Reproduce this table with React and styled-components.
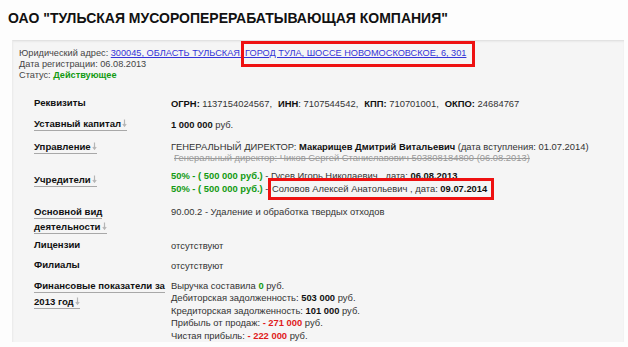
import React from "react";
import styled, { createGlobalStyle } from "styled-components";

const GlobalStyle = createGlobalStyle`
  body {
    margin: 0;
    background: #fdfdfd;
    font-family: "Liberation Sans", Arial, sans-serif;
    color: #333;
  }
`;

const Page = styled.div`
  width: 628px;
  height: 347px;
  overflow: hidden;
`;

const Title = styled.h1`
  margin: 0;
  padding: 9px 0 0 8px;
  font-size: 14px;
  line-height: 18px;
  font-weight: bold;
  color: #111;
`;

const Panel = styled.div`
  margin: 13px 0 0 12px;
  width: 611px;
  height: 301px;
  overflow: hidden;
  background: #f5f5f5;
  border-top: 1px solid #e2e2e2;
  border-left: 1px solid #ececec;
  box-shadow: inset 0 1px 2px rgba(0, 0, 0, 0.05);
`;

const Info = styled.div`
  padding: 7px 6px 0;
  font-size: 9.2px;
  line-height: 11px;
  color: #444;
`;

const Address = styled.a`
  color: #3434d8;
  text-decoration: underline;
`;

const Marked = styled.span`
  border: 3px solid #ee1111;
  padding: ${(p) => p.$pad};
  margin: ${(p) => p.$margin};
`;

const Active = styled.b`
  color: #129a12;
`;

const Table = styled.div`
  padding-left: 21px;
  display: flex;
  flex-direction: column;
`;

const Row = styled.div`
  display: flex;
  align-items: flex-start;
  margin-top: ${(p) => p.$mt || 3}px;
`;

const Label = styled.div`
  flex: 0 0 137px;
  font-size: 9.6px;
  line-height: ${(p) => p.$lh || 18}px;
  padding-top: ${(p) => p.$top || 0}px;
  font-weight: bold;
  color: #111;
`;

const Toggle = styled.span`
  padding-bottom: 1px;
  border-bottom: 1px solid #a8a8a8;
`;

const Arrow = () => (
  <svg width="5" height="8" viewBox="0 0 5 8" style={{ marginLeft: 1 }}>
    <path d="M2.5 0.5V7M0.8 5L2.5 7.2L4.2 5" stroke="#b5b5b5" strokeWidth="1.2" fill="none" />
  </svg>
);

const Value = styled.div`
  flex: 1;
  min-width: 0;
  font-size: 9.4px;
  line-height: ${(p) => p.$lh || 13}px;
  padding-top: ${(p) => (p.$top === undefined ? 2.5 : p.$top)}px;
  color: #333;
`;

const Gap = styled.span`
  display: inline-block;
  width: 6px;
`;

const Old = styled.div`
  color: #9a9a9a;
  text-decoration: line-through;
  padding-left: 3px;
`;

const Green = styled.b`
  color: #129a12;
`;

const Red = styled.b`
  color: #e01b1b;
`;

const Dark = styled.b`
  color: #111;
`;

export default function App() {
  return (
    <Page>
      <GlobalStyle />
      <Title>ОАО "ТУЛЬСКАЯ МУСОРОПЕРЕРАБАТЫВАЮЩАЯ КОМПАНИЯ"</Title>
      <Panel>
        <Info>
          <div>
            Юридический адрес:{" "}
            <Address>
              300045, ОБЛАСТЬ ТУЛЬСКАЯ,{" "}
              <Marked $pad="4px 6px 6px 1px" $margin="0 -9px 0 -4px">
                ГОРОД ТУЛА, ШОССЕ НОВОМОСКОВСКОЕ, 6, 301
              </Marked>
            </Address>
          </div>
          <div>Дата регистрации: 06.08.2013</div>
          <div>
            Статус: <Active>Действующее</Active>
          </div>
        </Info>
        <Table>
          <Row $mt={13}>
            <Label>Реквизиты</Label>
            <Value>
              <Dark>ОГРН:</Dark> 1137154024567,<Gap />
              <Dark>ИНН</Dark>: 7107544542,<Gap />
              <Dark>КПП:</Dark> 710701001,<Gap />
              <Dark>ОКПО:</Dark> 24684767
            </Value>
          </Row>
          <Row $mt={3}>
            <Label>
              <Toggle>Уставный капитал<Arrow /></Toggle>
            </Label>
            <Value>
              <Dark>1 000 000</Dark> руб.
            </Value>
          </Row>
          <Row $mt={5}>
            <Label>
              <Toggle>Управление<Arrow /></Toggle>
            </Label>
            <Value $lh={11.5}>
              <div>
                ГЕНЕРАЛЬНЫЙ ДИРЕКТОР: <Dark>Макарищев Дмитрий Витальевич</Dark> (дата вступления: 01.07.2014)
              </div>
              <Old>Генеральный директор: Чиков Сергей Станиславович 503808184800 (06.08.2013)</Old>
            </Value>
          </Row>
          <Row $mt={5}>
            <Label $top={2}>
              <Toggle>Учредители<Arrow /></Toggle>
            </Label>
            <Value $lh={13.5} $top={0}>
              <div>
                <Green>50% - ( 500 000 руб.)</Green> - Гусев Игорь Николаевич , дата: <Dark>06.08.2013</Dark>
              </div>
              <div>
                <Green>50% - ( 500 000 руб.)</Green> -{" "}
                <Marked $pad="2px 4px 3px 1px" $margin="0 -6px 0 -3px">
                  Соловов Алексей Анатольевич , дата: <Dark>09.07.2014</Dark>
                </Marked>
              </div>
            </Value>
          </Row>
          <Row $mt={8}>
            <Label $lh={15}>
              <Toggle>Основной вид деятельности<Arrow /></Toggle>
            </Label>
            <Value $top={1}>90.00.2 - Удаление и обработка твердых отходов</Value>
          </Row>
          <Row $mt={2.5}>
            <Label>Лицензии</Label>
            <Value>отсутствуют</Value>
          </Row>
          <Row $mt={2}>
            <Label>Филиалы</Label>
            <Value>отсутствуют</Value>
          </Row>
          <Row $mt={3}>
            <Label $lh={16} $top={1}>
              <Toggle>Финансовые показатели за 2013 год<Arrow /></Toggle>
            </Label>
            <Value $lh={12.5}>
              <div>
                Выручка составила <Green>0</Green> руб.
              </div>
              <div>
                Дебиторская задолженность: <Dark>503 000</Dark> руб.
              </div>
              <div>
                Кредиторская задолженность: <Dark>101 000</Dark> руб.
              </div>
              <div>
                Прибыль от продаж: <Red>- 271 000</Red> руб.
              </div>
              <div>
                Чистая прибыль: <Red>- 222 000</Red> руб.
              </div>
            </Value>
          </Row>
        </Table>
      </Panel>
    </Page>
  );
}
